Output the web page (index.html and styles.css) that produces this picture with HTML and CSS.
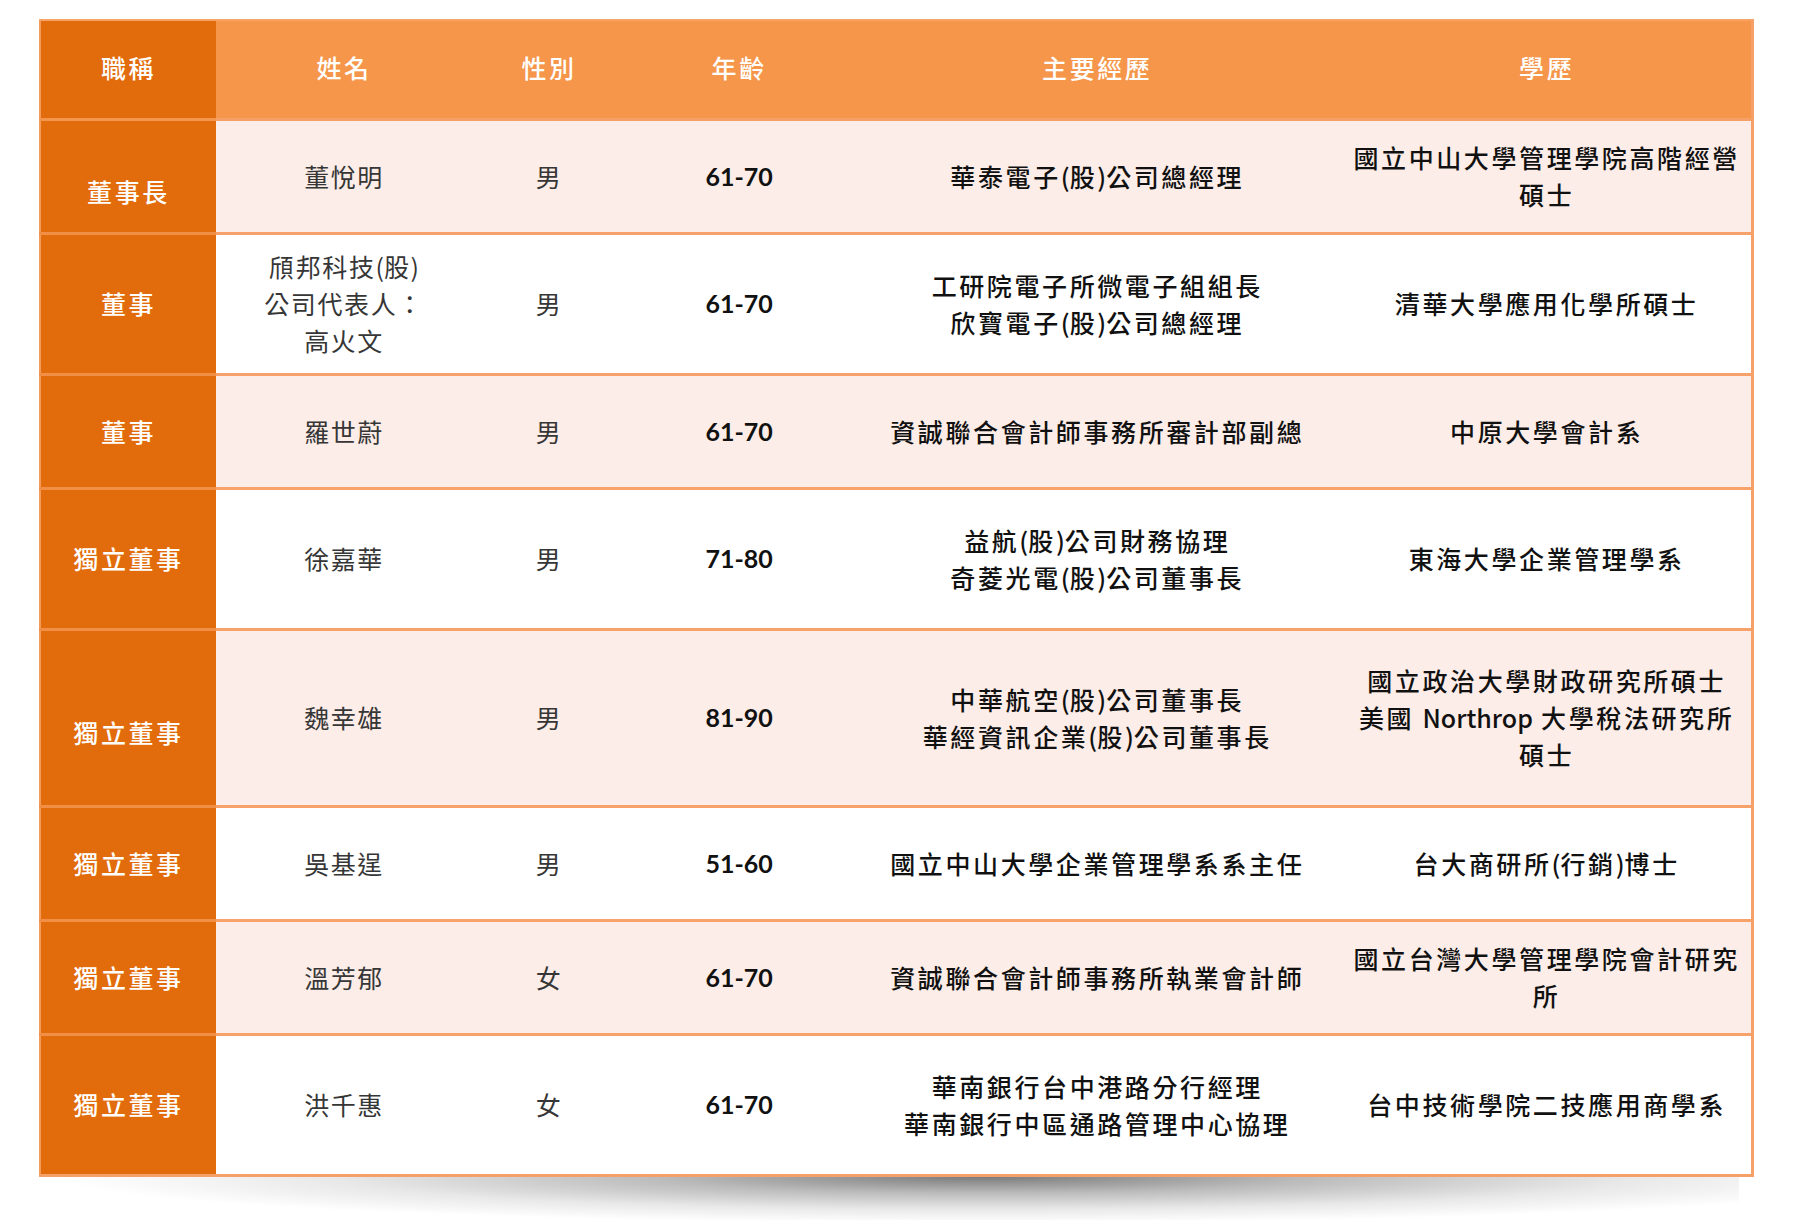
FILE: index.html
```html
<!DOCTYPE html>
<html lang="zh-Hant">
<head>
<meta charset="utf-8">
<title>董事會成員</title>
<link rel="stylesheet" href="styles.css">
</head>
<body>
<div class="page">
  <div class="board">
    <table class="grid">
      <colgroup>
        <col class="c-title"><col class="c-name"><col class="c-sex"><col class="c-age"><col class="c-exp"><col class="c-edu">
      </colgroup>
      <thead>
        <tr class="head">
          <th class="title">職稱</th>
          <th>姓名</th>
          <th>性別</th>
          <th>年齡</th>
          <th>主要經歷</th>
          <th>學歷</th>
        </tr>
      </thead>
      <tbody>
        <tr class="tint r114">
          <td class="title low">董事長</td>
          <td class="name">董悅明</td>
          <td class="name">男</td>
          <td class="age">61-70</td>
          <td class="txt">華泰電子<span class="lat">(</span>股<span class="lat">)</span>公司總經理</td>
          <td class="txt">國立中山大學管理學院高階經營<br>碩士</td>
        </tr>
        <tr class="r141">
          <td class="title">董事</td>
          <td class="name">頎邦科技<span class="lat">(</span>股<span class="lat">)</span><br>公司代表人：<br>高火文</td>
          <td class="name">男</td>
          <td class="age">61-70</td>
          <td class="txt">工研院電子所微電子組組長<br>欣寶電子<span class="lat">(</span>股<span class="lat">)</span>公司總經理</td>
          <td class="txt">清華大學應用化學所碩士</td>
        </tr>
        <tr class="tint r114">
          <td class="title">董事</td>
          <td class="name">羅世蔚</td>
          <td class="name">男</td>
          <td class="age">61-70</td>
          <td class="txt">資誠聯合會計師事務所審計部副總</td>
          <td class="txt">中原大學會計系</td>
        </tr>
        <tr class="r141">
          <td class="title">獨立董事</td>
          <td class="name">徐嘉華</td>
          <td class="name">男</td>
          <td class="age">71-80</td>
          <td class="txt">益航<span class="lat">(</span>股<span class="lat">)</span>公司財務協理<br>奇菱光電<span class="lat">(</span>股<span class="lat">)</span>公司董事長</td>
          <td class="txt">東海大學企業管理學系</td>
        </tr>
        <tr class="tint r177">
          <td class="title low">獨立董事</td>
          <td class="name">魏幸雄</td>
          <td class="name">男</td>
          <td class="age">81-90</td>
          <td class="txt">中華航空<span class="lat">(</span>股<span class="lat">)</span>公司董事長<br>華經資訊企業<span class="lat">(</span>股<span class="lat">)</span>公司董事長</td>
          <td class="txt">國立政治大學財政研究所碩士<br>美國 <span class="lat">Northrop</span> 大學稅法研究所<br>碩士</td>
        </tr>
        <tr class="r114">
          <td class="title">獨立董事</td>
          <td class="name">吳基逞</td>
          <td class="name">男</td>
          <td class="age">51-60</td>
          <td class="txt">國立中山大學企業管理學系系主任</td>
          <td class="txt">台大商研所<span class="lat">(</span>行銷<span class="lat">)</span>博士</td>
        </tr>
        <tr class="tint r114">
          <td class="title">獨立董事</td>
          <td class="name">溫芳郁</td>
          <td class="name">女</td>
          <td class="age">61-70</td>
          <td class="txt">資誠聯合會計師事務所執業會計師</td>
          <td class="txt">國立台灣大學管理學院會計研究<br>所</td>
        </tr>
        <tr class="r141 last">
          <td class="title">獨立董事</td>
          <td class="name">洪千惠</td>
          <td class="name">女</td>
          <td class="age">61-70</td>
          <td class="txt">華南銀行台中港路分行經理<br>華南銀行中區通路管理中心協理</td>
          <td class="txt">台中技術學院二技應用商學系</td>
        </tr>
      </tbody>
    </table>
    <div class="shadow"></div>
  </div>
</div>
</body>
</html>
```

FILE: styles.css
```css
* { box-sizing: border-box; }

html, body {
  margin: 0;
  padding: 0;
  background: #ffffff;
}

body {
  font-family: "Noto Sans CJK TC", "Noto Sans CJK SC", sans-serif;
}

.page {
  padding: 19px 0 0 39px;
}

.board {
  width: 1715px;
}

.grid {
  border-collapse: collapse;
  table-layout: fixed;
  width: 1715px;
  border-right: 3px solid #f4a068;
  border-left: 2px solid #f29b5a;
}

.c-title { width: 176px; }
.c-name { width: 256px; }
.c-sex { width: 154px; }
.c-age { width: 226px; }
.c-exp { width: 490px; }
.c-edu { width: 410px; }

th, td {
  padding: 0 4px;
  text-align: center;
  vertical-align: middle;
  font-size: 25px;
  line-height: 37px;
  letter-spacing: 1.6px;
}

.head {
  height: 99px;
  background: #f5964a;
}

.head th {
  color: #ffffff;
  font-weight: 500;
  letter-spacing: 2.6px;
  padding-bottom: 4px;
  border-top: 2px solid #f6a368;
  border-bottom: 3px solid #f5a066;
}

.head th.title {
  background: #e26c0b;
  border-bottom-color: #f2954e;
}

tbody td {
  border-bottom: 3px solid #f6a26a;
  background: #ffffff;
}

tbody tr.tint td {
  background: #fcede8;
}

tbody td.title,
tbody tr.tint td.title {
  background: #e26c0b;
  color: #ffffff;
  font-weight: 500;
  letter-spacing: 2.6px;
  border-bottom-color: #f08f45;
}

tbody tr.last td { border-bottom-color: #f4a066; }

td.low { padding-top: 30px; }

.r114 { height: 114px; }
.r141 { height: 141px; }
.r177 { height: 177px; }

td.name {
  color: #363636;
  font-weight: 400;
}

td.age {
  font-family: "Lato", "Open Sans", sans-serif;
  font-weight: 700;
  color: #111111;
  letter-spacing: 0;
  font-size: 25px;
}

td.txt {
  color: #111111;
  font-weight: 500;
  letter-spacing: 2.6px;
}

.lat {
  letter-spacing: 0;
}

.shadow {
  width: 1680px;
  height: 46px;
  margin-left: 20px;
  background:
    radial-gradient(ellipse 55% 100% at 55% 0%, rgba(80, 80, 80, 0.75) 0%, rgba(120, 120, 120, 0.5) 35%, rgba(180, 180, 180, 0.3) 70%, rgba(255, 255, 255, 0) 100%);
}
```
